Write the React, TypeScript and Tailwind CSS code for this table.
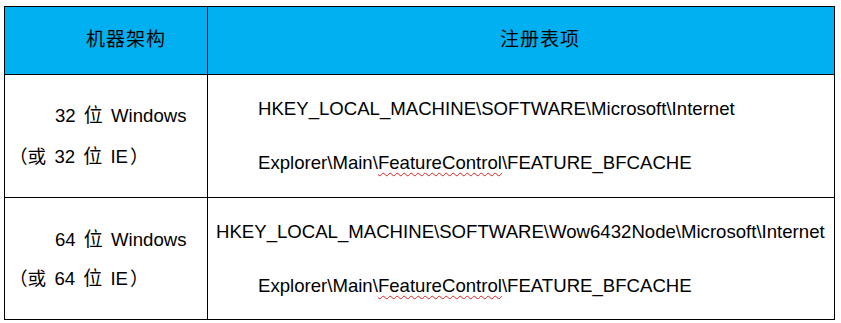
import React from "react";

const latin = "font-['Liberation_Sans','Noto_Sans_CJK_SC',sans-serif]";

function Squiggle({ children }: { children: React.ReactNode }) {
  return (
    <span className="underline decoration-wavy decoration-[#e0201c] decoration-1 underline-offset-[3px]">
      {children}
    </span>
  );
}

function KeyPath({ first, indentFirst }: { first: string; indentFirst: boolean }) {
  return (
    <div className="flex flex-col justify-center leading-[54px] whitespace-nowrap">
      <div className={indentFirst ? "pl-[50px]" : "pl-[8px]"}>{first}</div>
      <div className="pl-[50px]">
        Explorer\Main\<Squiggle>FeatureControl</Squiggle>\FEATURE_BFCACHE
      </div>
    </div>
  );
}

function Arch({ bits, lead }: { bits: string; lead: string }) {
  return (
    <div className={`border-r border-b border-black flex flex-col justify-center ${lead} whitespace-nowrap`}>
      <div className="pl-[50px]">
        {bits} <span className="text-[19px] mx-[3px]">位</span> Windows
      </div>
      <div className="pl-[4px]">
        （<span className="mr-[3px]">或</span> {bits} <span className="text-[19px] mx-[3px]">位</span> IE<span className="ml-[2px]">）</span>
      </div>
    </div>
  );
}

export default function App() {
  return (
    <div className={`w-[841px] h-[323px] bg-white pt-[6px] pl-[4px] text-[18.6px] text-black ${latin}`}>
      <div className="grid grid-cols-[203px_627px] grid-rows-[68px_123px_122px] w-[831px] border-l border-t border-black">
        <div className="bg-[#00b0f0] border-r border-b border-black flex items-center pl-[81px] text-[19px] tracking-[1px]">
          机器架构
        </div>
        <div className="bg-[#00b0f0] border-r border-b border-black flex items-center pl-[292px] text-[19px] tracking-[1px]">
          注册表项
        </div>

        <Arch bits="32" lead="leading-[41px]" />
        <div className="border-r border-b border-black flex">
          <KeyPath first="HKEY_LOCAL_MACHINE\SOFTWARE\Microsoft\Internet" indentFirst />
        </div>

        <Arch bits="64" lead="leading-[39px]" />
        <div className="border-r border-b border-black flex">
          <KeyPath first="HKEY_LOCAL_MACHINE\SOFTWARE\Wow6432Node\Microsoft\Internet" indentFirst={false} />
        </div>
      </div>
    </div>
  );
}
